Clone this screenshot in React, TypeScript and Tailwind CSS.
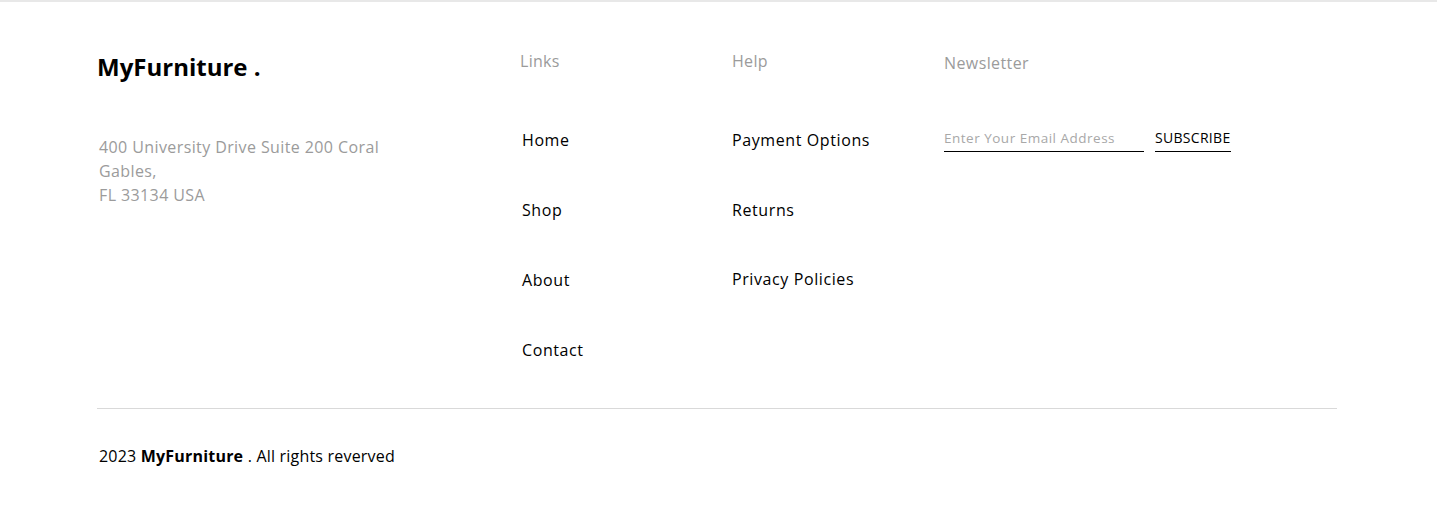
import React from 'react';

const font = { fontFamily: '"Open Sans", "Liberation Sans", sans-serif' };

const links = ['Home', 'Shop', 'About', 'Contact'];
const help = ['Payment Options', 'Returns', 'Privacy Policies'];

export default function App() {
  return (
    <footer className="w-full bg-white border-t-2 border-[#e8e8e8] text-black font-['Open_Sans',sans-serif]">
      <div className="w-[1240px] ml-[97px]">
        <div className="flex pt-[49px] h-[406px]">
          {/* Brand */}
          <div className="w-[423px]">
            <h2 className="-mt-[1px] text-[24px] font-bold leading-[34px]">MyFurniture .</h2>
            <p className="mt-[51px] ml-[2px] w-[300px] text-[16px] tracking-[0.4px] leading-[24px] text-[#9b9b9b]">
              400 University Drive Suite 200 Coral Gables,
              <br />
              FL 33134 USA
            </p>
          </div>

          {/* Links */}
          <div className="w-[212px]">
            <h3 className="-mt-[2px] text-[16px] tracking-[0.3px] leading-[24px] text-[#9b9b9b]">Links</h3>
            <ul className="mt-[55px] ml-[2px] flex flex-col gap-[46px]">
              {links.map((l) => (
                <li key={l} className="text-[16px] font-medium tracking-[0.6px] leading-[24px]">{l}</li>
              ))}
            </ul>
          </div>

          {/* Help */}
          <div className="w-[212px]">
            <h3 className="-mt-[2px] text-[16px] tracking-[0.3px] leading-[24px] text-[#9b9b9b]">Help</h3>
            <ul className="mt-[55px] flex flex-col gap-[46px]">
              {help.map((l, i) => (
                <li key={l} className={`text-[16px] font-medium tracking-[0.6px] leading-[24px] ${i === 2 ? '-mt-[1px]' : ''}`}>{l}</li>
              ))}
            </ul>
          </div>

          {/* Newsletter */}
          <div>
            <h3 className="text-[16px] tracking-[0.4px] leading-[24px] text-[#9b9b9b]">Newsletter</h3>
            <div className="mt-[53px] flex items-end gap-[11px]">
              <input
                placeholder="Enter Your Email Address"
                className="w-[200px] border-b border-black pb-[3px] text-[13.5px] tracking-[0.5px] leading-[20px] outline-none placeholder:text-[#a8a8a8]"
                style={font}
              />
              <button className="border-b border-black pb-[3px] text-[14px] font-medium tracking-[0.3px] leading-[20px]" style={font}>
                SUBSCRIBE
              </button>
            </div>
          </div>
        </div>

        <div className="border-t border-[#d9d9d9] pt-[35px] pb-[40px]">
          <p className="ml-[2px] text-[16px] tracking-[0.2px] leading-[24px]">
            2023 <span className="font-bold">MyFurniture</span> . All rights reverved
          </p>
        </div>
      </div>
    </footer>
  );
}
